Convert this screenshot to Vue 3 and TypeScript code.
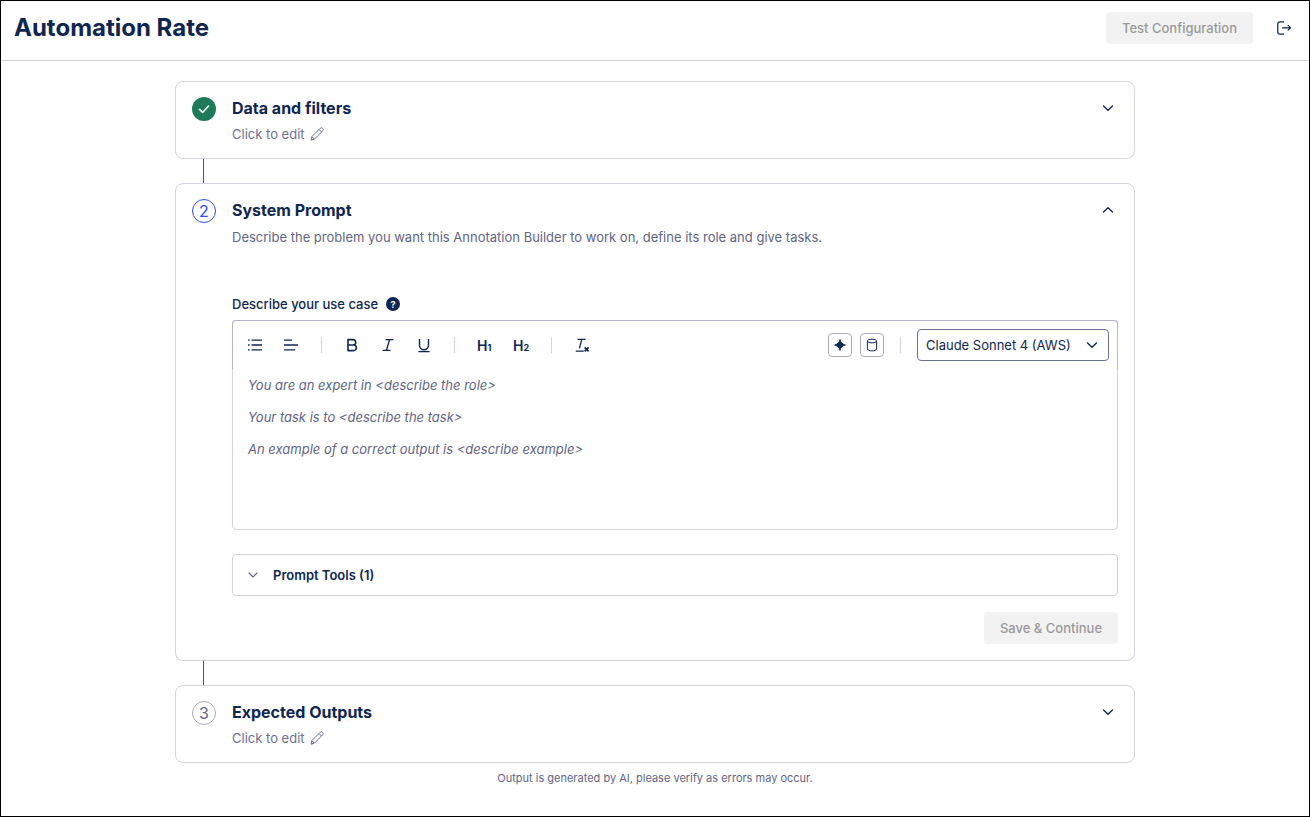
<script setup lang="ts">
const promptLines = [
  'You are an expert in <describe the role>',
  'Your task is to <describe the task>',
  'An example of a correct output is <describe example>',
]
</script>

<template>
  <div class="page">
    <header class="topbar">
      <h1 class="page-title">Automation Rate</h1>
      <div class="topbar-actions">
        <button class="btn-disabled test-btn" disabled>Test Configuration</button>
        <svg class="exit-icon" width="16" height="16" viewBox="0 0 16 16" fill="none" stroke="#0f2650" stroke-width="1.2" stroke-linecap="round" stroke-linejoin="round">
          <path d="M7.6 1.8H3.9a2.1 2.1 0 0 0-2.1 2.1v8.2a2.1 2.1 0 0 0 2.1 2.1h3.7" />
          <path d="M6.4 7.8h8.2M12.2 5.4l2.4 2.4-2.4 2.4" />
        </svg>
      </div>
    </header>

    <main class="steps">
      <section class="card card-collapsed">
        <div class="step-done">
          <svg width="14" height="14" viewBox="0 0 14 14" fill="none" stroke="#fff" stroke-width="1.5" stroke-linecap="round" stroke-linejoin="round">
            <path d="M2.5 7.4 5.6 10.4 11.5 4" />
          </svg>
        </div>
        <div class="card-body">
          <h2 class="card-title">Data and filters</h2>
          <p class="edit-hint">
            Click to edit
            <svg width="16" height="16" viewBox="0 0 16 16" fill="none" stroke="#6b7090" stroke-width="1" stroke-linejoin="round">
              <path d="M2 14.2 2.9 10.6 11.3 2.2a1.4 1.4 0 0 1 2 0l.5.5a1.4 1.4 0 0 1 0 2L5.4 13.2 2 14.2Z" />
              <path d="M10 3.5 12.5 6M2.9 10.6l2.5 2.6" />
            </svg>
          </p>
        </div>
        <svg class="chevron" width="12" height="12" viewBox="0 0 12 12" fill="none" stroke="#0f2650" stroke-width="1.4" stroke-linecap="round" stroke-linejoin="round">
          <path d="M1.5 4 6 8.2 10.5 4" />
        </svg>
      </section>

      <div class="connector"></div>

      <section class="card card-open">
        <div class="step-num step-active">2</div>
        <div class="card-body">
          <h2 class="card-title">System Prompt</h2>
          <p class="card-desc">Describe the problem you want this Annotation Builder to work on, define its role and give tasks.</p>

          <div class="label-row">
            <label class="field-label">Describe your use case</label>
            <span class="help-dot">?</span>
          </div>

          <div class="editor">
            <div class="toolbar">
              <div class="tool-group">
                <svg class="tool" width="16" height="16" viewBox="0 0 16 16" fill="none" stroke="#0f2650" stroke-width="1.3">
                  <path d="M4.5 3.2H15M4.5 8H15M4.5 12.8H15" />
                  <path d="M1 3.2h1.6M1 8h1.6M1 12.8h1.6" />
                </svg>
                <svg class="tool" width="16" height="16" viewBox="0 0 16 16" fill="none" stroke="#0f2650" stroke-width="1.3">
                  <path d="M1 3.2h8M1 8h14M1 12.8h11" />
                </svg>
              </div>
              <span class="divider"></span>
              <div class="tool-group">
                <svg class="tool" width="16" height="16" viewBox="0 0 16 16" fill="none" stroke="#0f2650" stroke-width="1.6" stroke-linejoin="round">
                  <path d="M4 2.6h5a2.7 2.7 0 0 1 0 5.4H4V2.6ZM4 8h5.6a2.8 2.8 0 0 1 0 5.6H4V8Z" />
                </svg>
                <svg class="tool" width="16" height="16" viewBox="0 0 16 16" fill="none" stroke="#0f2650" stroke-width="1.4">
                  <path d="M5.5 2.6h8M2.5 13.4h8M9.6 2.6 6.4 13.4" />
                </svg>
                <svg class="tool" width="16" height="16" viewBox="0 0 16 16" fill="none" stroke="#0f2650" stroke-width="1.4">
                  <path d="M3.5 2v6.2a4.5 4.5 0 0 0 9 0V2M2.4 14.6h11.2" />
                </svg>
              </div>
              <span class="divider"></span>
              <div class="tool-group">
                <span class="tool-h">H<small>1</small></span>
                <span class="tool-h">H<small>2</small></span>
              </div>
              <span class="divider"></span>
              <svg class="tool" width="16" height="16" viewBox="0 0 16 16" fill="none" stroke="#0f2650" stroke-width="1.3">
                <path d="M3.6 2.4h8M7.8 2.4 5.4 11.4M1.8 14.2h8" />
                <path d="M10.6 10.4l4 4M14.6 10.4l-4 4" stroke-width="1.6" />
              </svg>

              <div class="toolbar-right">
                <button class="icon-btn">
                  <svg width="12" height="12" viewBox="0 0 12 12" fill="#0f2650">
                    <path d="M6 .6C6.5 3.4 8.4 5.3 11.4 6 8.4 6.7 6.5 8.6 6 11.4 5.5 8.6 3.6 6.7.6 6 3.6 5.3 5.5 3.4 6 .6Z" stroke="#0f2650" stroke-width=".9" stroke-linejoin="round" />
                  </svg>
                </button>
                <button class="icon-btn">
                  <svg width="14" height="14" viewBox="0 0 14 14" fill="none" stroke="#0f2650" stroke-width="1">
                    <ellipse cx="7" cy="3" rx="4.6" ry="1.9" />
                    <path d="M2.4 3v8c0 1 2.1 1.9 4.6 1.9s4.6-.9 4.6-1.9V3" />
                  </svg>
                </button>
                <span class="divider divider-right"></span>
                <div class="model-select">
                  <span>Claude Sonnet 4 (AWS)</span>
                  <svg width="12" height="12" viewBox="0 0 12 12" fill="none" stroke="#0f2650" stroke-width="1.4" stroke-linecap="round" stroke-linejoin="round">
                    <path d="M1.5 4 6 8.2 10.5 4" />
                  </svg>
                </div>
              </div>
            </div>
            <div class="editor-text">
              <p v-for="line in promptLines" :key="line">{{ line }}</p>
            </div>
          </div>

          <div class="tools-row">
            <svg width="10" height="10" viewBox="0 0 10 10" fill="none" stroke="#5f6585" stroke-width="1.1" stroke-linecap="round" stroke-linejoin="round">
              <path d="M1 3 5 7 9 3" />
            </svg>
            <span>Prompt Tools (1)</span>
          </div>

          <div class="save-row">
            <button class="btn-disabled save-btn" disabled>Save &amp; Continue</button>
          </div>
        </div>
        <svg class="chevron" width="12" height="12" viewBox="0 0 12 12" fill="none" stroke="#0f2650" stroke-width="1.4" stroke-linecap="round" stroke-linejoin="round">
          <path d="M1.5 8 6 3.8 10.5 8" />
        </svg>
      </section>

      <div class="connector"></div>

      <section class="card card-collapsed">
        <div class="step-num">3</div>
        <div class="card-body">
          <h2 class="card-title">Expected Outputs</h2>
          <p class="edit-hint">
            Click to edit
            <svg width="16" height="16" viewBox="0 0 16 16" fill="none" stroke="#6b7090" stroke-width="1" stroke-linejoin="round">
              <path d="M2 14.2 2.9 10.6 11.3 2.2a1.4 1.4 0 0 1 2 0l.5.5a1.4 1.4 0 0 1 0 2L5.4 13.2 2 14.2Z" />
              <path d="M10 3.5 12.5 6M2.9 10.6l2.5 2.6" />
            </svg>
          </p>
        </div>
        <svg class="chevron" width="12" height="12" viewBox="0 0 12 12" fill="none" stroke="#0f2650" stroke-width="1.4" stroke-linecap="round" stroke-linejoin="round">
          <path d="M1.5 4 6 8.2 10.5 4" />
        </svg>
      </section>

      <p class="disclaimer">Output is generated by AI, please verify as errors may occur.</p>
    </main>
  </div>
</template>

<style>
html,
body {
  margin: 0;
  background: #fff;
}
</style>

<style scoped>
.page {
  box-sizing: border-box;
  width: 1310px;
  height: 817px;
  border: 1px solid #000;
  font-family: Inter, "Liberation Sans", sans-serif;
  color: #0f2650;
  background: #fff;
  overflow: hidden;
}

.topbar {
  box-sizing: border-box;
  height: 60px;
  padding: 0 17px 0 13px;
  display: flex;
  align-items: center;
  justify-content: space-between;
  border-bottom: 1px solid #d3d3df;
}

.page-title {
  margin: 0 0 6px;
  font-size: 24px;
  line-height: 32px;
  font-weight: 700;
}

.topbar-actions {
  display: flex;
  align-items: center;
  gap: 23px;
  margin-bottom: 5px;
}

.btn-disabled {
  border: 0;
  border-radius: 4px;
  background: #f2f2f2;
  color: #9a9a9a;
  font-family: inherit;
  font-size: 13px;
  font-weight: 500;
  height: 32px;
}

.test-btn {
  width: 147px;
}

.steps {
  width: 960px;
  margin: 20px auto 0;
}

.card {
  box-sizing: border-box;
  border: 1px solid #d3d3df;
  border-radius: 8px;
  padding: 14px 20px 0 16px;
  display: flex;
  background: #fff;
}

.card-collapsed {
  height: 78px;
}

.card-open {
  height: 478px;
}

.connector {
  width: 1px;
  height: 24px;
  margin-left: 28px;
  background: #2b4de0;
}

.step-done,
.step-num {
  box-sizing: border-box;
  flex: none;
  width: 24px;
  height: 24px;
  margin-top: 1px;
  margin-right: 16px;
  border-radius: 50%;
  display: flex;
  align-items: center;
  justify-content: center;
}

.step-done {
  background: #1f7a5a;
}

.step-num {
  border: 1px solid #a9acc0;
  color: #5f6585;
  font-size: 16px;
}

.step-active {
  border-color: #2b4de0;
  color: #2b4de0;
}

.card-body {
  flex: 1;
  min-width: 0;
}

.card-title {
  margin: 0;
  font-size: 16px;
  line-height: 24px;
  font-weight: 700;
}

.edit-hint {
  margin: 4px 0 0;
  display: flex;
  align-items: center;
  gap: 4px;
  font-size: 13px;
  line-height: 20px;
  color: #6b7090;
}

.card-desc {
  margin: 5px 0 0;
  font-size: 13px;
  line-height: 20px;
  color: #5f6585;
}

.chevron {
  flex: none;
  margin: 6px 0 0 0;
}

.label-row {
  margin-top: 47px;
  display: flex;
  align-items: center;
  gap: 8px;
  height: 20px;
}

.field-label {
  font-size: 13px;
  font-weight: 500;
}

.help-dot {
  width: 14px;
  height: 14px;
  border-radius: 50%;
  background: #0f2650;
  color: #fff;
  font-size: 9px;
  font-weight: 700;
  display: flex;
  align-items: center;
  justify-content: center;
}

.editor {
  box-sizing: border-box;
  margin-top: 6px;
  width: 886px;
  height: 210px;
  border: 1px solid #d3d3df;
  border-radius: 4px;
  margin-right: -32px;
}

.toolbar {
  box-sizing: border-box;
  height: 49px;
  margin: -1px -1px 0;
  padding: 0 8px 0 14px;
  display: flex;
  align-items: center;
  border: 1px solid #b4b4cc;
  border-bottom: 0;
  border-radius: 4px 4px 0 0;
}

.tool-group {
  display: flex;
  align-items: center;
  gap: 20px;
}

.tool {
  display: block;
}

.tool-h {
  width: 16px;
  font-size: 14px;
  font-weight: 600;
  white-space: nowrap;
}

.tool-h small {
  font-size: 9px;
  font-weight: 700;
}

.divider {
  width: 1px;
  height: 16px;
  margin: 0 22px;
  background: #d3d3df;
}

.toolbar-right {
  margin-left: auto;
  display: flex;
  align-items: center;
  gap: 8px;
}

.divider-right {
  margin: 0 8px;
}

.icon-btn {
  box-sizing: border-box;
  width: 24px;
  height: 24px;
  padding: 0;
  border: 1px solid #a9acc0;
  border-radius: 4px;
  background: #fff;
  display: flex;
  align-items: center;
  justify-content: center;
}

.model-select {
  box-sizing: border-box;
  width: 192px;
  height: 32px;
  padding: 0 10px 0 8px;
  border: 1px solid #6b7090;
  border-radius: 4px;
  display: flex;
  align-items: center;
  justify-content: space-between;
  font-size: 13px;
}

.editor-text {
  padding: 6px 15px;
  font-size: 13px;
  font-style: italic;
  color: #5f6585;
}

.editor-text p {
  margin: 0 0 12px;
  line-height: 20px;
}

.tools-row {
  box-sizing: border-box;
  margin-top: 24px;
  width: 886px;
  height: 42px;
  padding-left: 15px;
  display: flex;
  align-items: center;
  gap: 15px;
  border: 1px solid #d3d3df;
  border-radius: 4px;
  font-size: 13px;
  font-weight: 600;
}

.save-row {
  width: 886px;
  margin-top: 16px;
  display: flex;
  justify-content: flex-end;
}

.save-btn {
  width: 134px;
}

.disclaimer {
  margin: 7px 0 0;
  text-align: center;
  font-size: 11px;
  line-height: 16px;
  color: #5f6585;
}
</style>
